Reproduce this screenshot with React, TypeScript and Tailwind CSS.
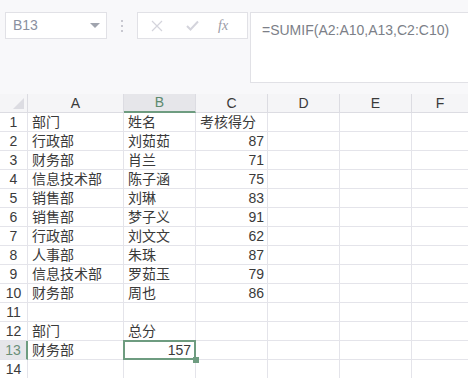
const rows: [string, string, string][] = [
  ['部门', '姓名', '考核得分'],
  ['行政部', '刘茹茹', '87'],
  ['财务部', '肖兰', '71'],
  ['信息技术部', '陈子涵', '75'],
  ['销售部', '刘琳', '83'],
  ['销售部', '梦子义', '91'],
  ['行政部', '刘文文', '62'],
  ['人事部', '朱珠', '87'],
  ['信息技术部', '罗茹玉', '79'],
  ['财务部', '周也', '86'],
  ['', '', ''],
  ['部门', '总分', ''],
  ['财务部', '157', ''],
  ['', '', ''],
];

const cols = ['A', 'B', 'C', 'D', 'E', 'F'];

function Toolbar() {
  return (
    <div className="h-[94px] bg-[#f8f8fa] flex items-start pt-[12px] pl-[5px]">
      <div className="w-[102px] h-[27px] bg-white border border-[#e1e1e6] flex items-center justify-between pl-[7px] pr-[6px]">
        <span className="text-[14px] text-[#8a90a0]">B13</span>
        <span className="w-0 h-0 border-l-[5px] border-r-[5px] border-t-[5px] border-l-transparent border-r-transparent border-t-[#a0a4ae]" />
      </div>
      <div className="w-[30px] h-[27px] flex flex-col items-center justify-center gap-[3px]">
        <span className="w-[2px] h-[2px] bg-[#c8c8d0]" />
        <span className="w-[2px] h-[2px] bg-[#c8c8d0]" />
        <span className="w-[2px] h-[2px] bg-[#c8c8d0]" />
      </div>
      <div className="w-[111px] h-[27px] bg-white border border-[#e1e1e6] flex items-center">
        <svg width="12" height="12" viewBox="0 0 12 12" className="ml-[13px]">
          <path d="M1 1L11 11M11 1L1 11" stroke="#d4d4dc" strokeWidth="1.2" />
        </svg>
        <svg width="13" height="11" viewBox="0 0 13 11" className="ml-[23px]">
          <path d="M1 6L4.5 9.5L12 1.5" stroke="#d4d4dc" strokeWidth="2" fill="none" />
        </svg>
        <span className="ml-[19px] text-[14px] italic text-[#9a9aa6]" style={{ fontFamily: '"Liberation Serif", serif' }}>
          fx
        </span>
      </div>
      <div className="ml-[2px] flex-1 h-[71px] bg-white border border-r-0 border-[#e1e1e6] pl-[11px] pt-[5px]">
        <span className="text-[14px] text-[#7c7f88]">=SUMIF(A2:A10,A13,C2:C10)</span>
      </div>
    </div>
  );
}

function Grid() {
  return (
    <div className="grid grid-cols-[28px_96px_72px_72px_72px_72px_56px] auto-rows-[19px] bg-white text-[#3a3a3a]">
      <div className="bg-[#f5f5f7] border-r border-b border-[#dcdce2] relative">
        <svg width="11" height="11" viewBox="0 0 11 11" className="absolute right-[3px] bottom-[3px]">
          <path d="M11 0V11H0Z" fill="#dcdce2" />
        </svg>
      </div>
      {cols.map((c) => (
        <div
          key={c}
          className={
            c === 'B'
              ? 'bg-[#e6e6ea] border-r border-[#dcdce2] border-b-2 border-b-[#6e9c80] flex items-center justify-center text-[14px] text-[#5d8a6e]'
              : `bg-[#f5f5f7] ${c === 'F' ? '' : 'border-r'} border-b border-[#dcdce2] flex items-center justify-center text-[14px]`
          }
        >
          {c}
        </div>
      ))}
      {rows.map((r, i) => {
        const n = i + 1;
        const sel = n === 13;
        return [
          <div
            key={`h${n}`}
            className={
              sel
                ? 'bg-[#e6e6ea] border-r-2 border-r-[#6e9c80] border-b border-[#e4e4ea] flex items-center justify-center text-[14px] text-[#6a8f78]'
                : 'bg-white border-r border-b border-[#e4e4ea] flex items-center justify-center text-[14px]'
            }
          >
            {n}
          </div>,
          <div key={`a${n}`} className="border-r border-b border-[#e4e4ea] pl-[4px] flex items-center text-[14px] whitespace-nowrap">
            {r[0]}
          </div>,
          <div
            key={`b${n}`}
            className={
              sel
                ? 'relative border-r border-b border-[#e4e4ea] flex items-center justify-end pr-[4px] text-[14px]'
                : 'border-r border-b border-[#e4e4ea] pl-[4px] flex items-center text-[14px] whitespace-nowrap'
            }
          >
            {r[1]}
            {sel && (
              <>
                <span className="absolute -left-[1px] -top-[1px] -right-[1px] -bottom-[1px] border-2 border-[#6e9c80]" />
                <span className="absolute -right-[4px] -bottom-[4px] w-[6px] h-[6px] bg-[#6e9c80]" />
              </>
            )}
          </div>,
          <div
            key={`c${n}`}
            className={`border-r border-b border-[#e4e4ea] flex items-center text-[14px] whitespace-nowrap ${
              n === 1 ? 'pl-[4px]' : 'justify-end pr-[3px]'
            }`}
          >
            {r[2]}
          </div>,
          <div key={`d${n}`} className="border-r border-b border-[#e4e4ea]" />,
          <div key={`e${n}`} className="border-r border-b border-[#e4e4ea]" />,
          <div key={`f${n}`} className="border-b border-[#e4e4ea]" />,
        ];
      })}
    </div>
  );
}

export default function App() {
  return (
    <div
      className="w-[468px] h-[378px] overflow-hidden bg-white"
      style={{ fontFamily: '"Liberation Sans", "Noto Sans CJK SC", sans-serif' }}
    >
      <Toolbar />
      <Grid />
    </div>
  );
}
